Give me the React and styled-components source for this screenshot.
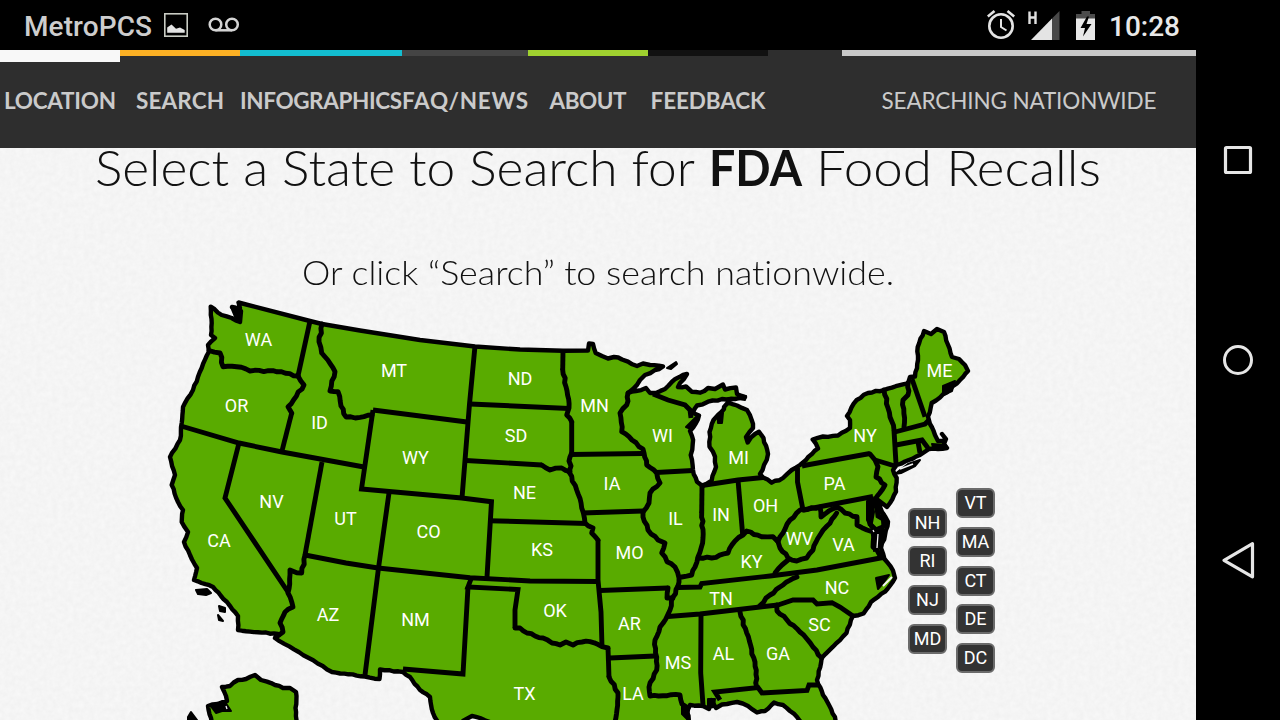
import React, { useLayoutEffect, useRef, useState } from "react";
import styled, { createGlobalStyle } from "styled-components";

const GlobalStyle = createGlobalStyle`
  * { box-sizing: border-box; }
  body { margin: 0; background: #000; overflow: hidden; }
`;

const Device = styled.div`
  width: 1280px;
  height: 720px;
  display: flex;
  flex-direction: column;
  background: #000;
  overflow: hidden;
`;

const StatusBar = styled.header`
  height: 50px;
  flex: none;
  display: flex;
  align-items: center;
  justify-content: space-between;
  padding: 0 100px 0 24px;
  font: 500 28px/50px Roboto, sans-serif;
`;

const StatusGroup = styled.div`
  display: flex;
  align-items: center;
  height: 50px;
  color: ${(p) => p.$color};
  svg { display: block; flex: none; }
`;

const StatusText = styled.span`
  padding-top: 3px;
`;

const Body = styled.div`
  display: flex;
  height: 670px;
`;

const Page = styled.main`
  position: relative;
  width: 1196px;
  height: 670px;
  background: #f4f4f4;
  overflow: hidden;
`;

const Paper = styled.svg`
  position: absolute;
  inset: 0;
  width: 100%;
  height: 100%;
`;

const NavBar = styled.nav`
  position: relative;
  z-index: 1;
  display: flex;
  height: 98px;
  background: #2e2e2e;
`;

const NavItem = styled.a`
  width: ${(p) => p.$width}px;
  height: 98px;
  flex: none;
  display: flex;
  justify-content: center;
  border-top: ${(p) => p.$bar || 6}px solid ${(p) => p.$accent};
  padding-top: ${(p) => 51 - (p.$bar || 6) - 14}px;
  color: #cacaca;
  font: ${(p) => (p.$light ? 400 : 700)} 22.5px/28px Lato, sans-serif;
  white-space: nowrap;
`;

const Fitted = styled.span`
  display: inline-block;
  flex: none;
  white-space: pre;
  transform-origin: 0 50%;
  font-variant-ligatures: none;
`;

const Title = styled.h1`
  position: relative;
  display: flex;
  margin: -11px 0 0;
  padding-left: 95px;
  gap: 14px;
  height: 60px;
  color: #111;
  font: 300 49px/60px Lato, sans-serif;
  strong { font-weight: 700; }
`;

const Subtitle = styled.p`
  position: relative;
  display: flex;
  margin: 55px 0 0;
  padding-left: 302px;
  height: 40px;
  color: #111;
  font: 300 33.5px/40px Lato, sans-serif;
`;

const MapArea = styled.section`
  position: relative;
  height: 430px;
  margin-top: -2px;
`;

const MapDrawing = styled.svg`
  display: block;
  width: 1196px;
  height: 430px;
  text {
    font: 400 18px Roboto, sans-serif;
    fill: #fff;
    text-anchor: middle;
  }
`;

const SmallStates = styled.div`
  position: absolute;
  left: 908px;
  top: 198px;
  display: flex;
  gap: 9px;
`;

const BadgeColumn = styled.div`
  display: flex;
  flex-direction: column;
  gap: 8.8px;
  padding-top: ${(p) => p.$offset}px;
`;

const Badge = styled.button`
  width: 39px;
  height: 30px;
  padding: 0 0 1px;
  border: 2px solid #6b6b6b;
  border-radius: 6px;
  background: #333;
  color: #fff;
  font: 400 18px/25px Roboto, sans-serif;
`;

const SoftKeys = styled.aside`
  width: 84px;
  height: 670px;
  display: flex;
  flex-direction: column;
  align-items: center;
  padding-top: 90px;
  gap: 160px;
  svg { display: block; }
`;

// Sizes a run of text to a given width, by tracking or by widening the letters.
function Fit({ width, children, as, stretch }) {
  const ref = useRef(null);
  const [style, setStyle] = useState({});
  useLayoutEffect(() => {
    const natural = ref.current.getBoundingClientRect().width;
    if (stretch) {
      setStyle({ transform: `scaleX(${width / natural})`, marginRight: width - natural });
    } else {
      const spacing = (width - natural) / (children.length - 1);
      setStyle({ letterSpacing: spacing, marginRight: -spacing });
    }
  }, []);
  return (
    <Fitted ref={ref} as={as} style={style}>
      {children}
    </Fitted>
  );
}

const NAV = [
  { label: "LOCATION", width: 120, text: 112, accent: "#f8f8f8", bar: 12 },
  { label: "SEARCH", width: 120, text: 88, accent: "#fbb024" },
  { label: "INFOGRAPHICS", width: 162, text: 162, accent: "#13bdd0" },
  { label: "FAQ/NEWS", width: 126, text: 126, accent: "#444" },
  { label: "ABOUT", width: 120, text: 77, accent: "#9fd12f" },
  { label: "FEEDBACK", width: 120, text: 115, accent: "#111" },
];

// Adds small deterministic notches along a line so coasts and rivers look irregular.
function rough(points, amount = 1) {
  const nums = points.trim().split(/\s+/).map((p) => p.split(",").map(Number));
  const out = [nums[0]];
  let k = 7;
  for (let i = 1; i < nums.length; i++) {
    const [x0, y0] = nums[i - 1];
    const [x1, y1] = nums[i];
    const len = Math.hypot(x1 - x0, y1 - y0);
    const n = Math.min(12, Math.floor(len / 4));
    for (let j = 1; j < n; j++) {
      k = (k * 37 + 11) % 101;
      const d = (k / 50 - 1) * amount;
      const t = j / n;
      out.push([x0 + (x1 - x0) * t - ((y1 - y0) / len) * d, y0 + (y1 - y0) * t + ((x1 - x0) / len) * d]);
    }
    out.push([x1, y1]);
  }
  return out.map((p) => p[0].toFixed(1) + "," + p[1].toFixed(1)).join(" ");
}

const NORTH = "238.5,302.5 310,321 322,324 360,330.5 420,340 475,346.5 520,349.5 563,350.7 588,350.5";
const LAKES = "588,350.5 589,343.5 593,344 595.7,353 602,356 608,358.5 614,357 622,359.5 628,361.6 637,366 643,363.5 650,365 663,366.5 655,370 645,375 640,380 633,389 628,393 636,391 646,388 650,393 656,393 665,389 672,381.7 683,375 687,374 680,383 678,387 686,386.5 691.7,391.7 700,392.7 708,388 715,389 723,384.5 725,389.5 736,387.5 737,394 745,397 735,399 722,399 708,401.7 697,405.5 693,413 699,415.5 696,423 690,431 692,436 692.7,444 690.7,455 693,470 697,481.7 702.5,486 711.7,480.5 716,467 715,456.7 709.5,446.7 709.5,432 713.5,420 718,415 724,409 724,407 728,402.5 737,405.5 747,410 751.7,420 753,428 746,437 747.7,442.5 755,434 759,431.7 763.5,438 768,454 764,465 760,474 763,477.5 771.7,482.7 783,478 791.7,470 800,465 806,460 818,448.5 812.7,439.5 823,436.5 838,435.5 850,428 850,420 847,416 856.7,400 868,393";
const ATLANTIC = "868,393 884,390 908,383.5 910,377 915,376.5 918,360 917.7,347 924,331 931,334 937,329 944,332 952,357 959,359 965,365 968,371 960,380 950,389 940,397.5 931.7,403 928,416.7 930,424 935,435 938,441 944,441 945,438 942,434 946,439 944,444 947,448 938,449 929,449 920,455 905,461.5 896.7,465 893,470 896.7,478 896,491.7 890,503 887,507 878,500 882,512 888,521.7 885,535 881,548 884.5,559 893,570.5 895,578 885,591.7 871,602 863.5,613.5 853,616 846.5,633 833,646.7 821.7,658 817,680 823,695 835,717 838,740";
const GULF = "838,740 808,730 797,717 783,705 774,702.5 765,711 757,712.5 748,706 737,702 722,704.5 716,708 711,700 709,709 703,706 690,705 687,712 690,724 690,740 500,740 490,722 480,718 472,716 463,721 458,740 450,740 440,725 433,713 430,697 420,690 410,677 403,672";
const WEST = "403,672 380,669.5 379.5,679 365,676.5 332,672 275,638 278,634 238,630 238,616 227,602 221,596 213,587 194,580 197,568 190,555 184,542 188,532 181.7,522 183,510 178,502 171.7,485 175,475 170,457 180,440 181.7,423 183,407 193,390 201.7,368 209,351.5 208,345 215,338 211,335 211.7,323 210.7,306.7 221.7,315 231.7,318 240,322 241,311 232,307 240,308 238.5,302.5";

const LAND = [
  NORTH,
  rough(LAKES, 0.8),
  rough(ATLANTIC, 0.6),
  rough(GULF, 0.6),
  rough(WEST, 0.5),
].join(" ");

const RIVERS = [
  "209,350.5 220,353 223,366.7 236.7,366.7 250,371 273,370.7 298,376",
  "298,376 304,385 288,406.7 291.7,413",
  "322,324 319,341.7 321.7,353 335,371.7 330,391 338,391.7 341,406 346,417 360,417.3 372,415",
  "541.7,465 550,470 561.7,468 570,471.7",
  "562.7,370 566,386.7 569,408 566.7,415 571.7,421.7",
  "571.7,453 569,461 571,466 569,472 576.7,490 581.7,508 585,523 593,528 591.7,533 598,540",
  "628,393 626.7,405 620,413 621.7,431.7 632,440 643,449 646.7,465 656.7,473 660,483 650,493 649,503 643,512",
  "643,512 643,517 648,530 658,540 665,543 661.7,553 667,561.7 675,567 679,578 678,586",
  "701.7,513 703,538 698,557 695,567 691.7,575 681.7,577",
  "698,558 711.7,558 728,553 735,541 743,535 746.7,531 761.7,536.7 773,536.7 778,541.7 783,533 790,520 800,510",
  "870,454 875,460 878,466.7 876,477 885,485 876.7,496.7",
  "884,390 888,408 890,417 894,430",
  "908,383 908,395 903,400 904,427",
  "778,541.7 780,548 788,558 796.7,561 806.7,558 813,550 820,535 827,526 836.7,513",
  "803,510 820,507 821,517 837,507 845,513 857,516.7 857,525 867,530 873,532 873,547 883,557",
  "788,560 782,565 775,573",
  "760,605.5 770,595 783,585 797,577",
  "776.7,605 777,611 787,620 800,632 813,647 821.7,658",
  "678,586 673,597 670,610 660,627 655,640 656.7,670 649,687 650,696 680,695 682,704 688,708",
  "515,628 520,628 527,633 535,636 543,638 552,643 560,645 566,642 573,645 582,642 590,641.7 602,646.7 608,648",
  "609,677 618,693 615,722",
  "305,555 301.7,573 296.7,572.7 290,570 288,593 293,607 285,612 280,623 283,632 276,637",
  "740,612 755,662 756.7,687",
  "668,588 667,598 673,598",
];

const LINES = [
  "310,321 298,376",
  "291.7,413 281.7,452",
  "181,426 239,443 282,452 364,467",
  "373,410 467,422",
  "373,410 361.5,489 461.7,498 491.5,501.7 487,577",
  "475,346 469.5,404 462,498",
  "470,404 569,408.5",
  "466,460.5 541.7,465",
  "563,351 562.7,370",
  "571.7,421.7 571.7,454.5 643,453.5",
  "582,513 643,511",
  "656,472.5 693,470.5",
  "653,394 668,400 685,405 690,410 691,418",
  "702,486 701.7,513",
  "702,485.5 738,480 763,477.5",
  "738,480 742.7,535",
  "797.5,468 797.5,482 803,510",
  "802,466 806.7,465 870,453.5",
  "803,510 873,496.5",
  "875,460 895,466",
  "894,430 896,464",
  "912,379 925,416.7",
  "895,432 925,424 929,420",
  "896,445 922,440 928,448",
  "918,441.7 920,453",
  "883,557.5 817,570 770,576 701.7,583.5 700,587 678,587.5",
  "668,616.5 700,614 760,607 778,605",
  "778,605 793,600 813,600 817,604 832,602.7 840,607 853,616",
  "701,615 700.7,673 703,705",
  "720,700 715,692 758,687.5 762,693 807,690.5 809,685 818,685",
  "600,590.5 668,588",
  "610,658 655,656",
  "598,540 598,580 601,612 602,646.7",
  "608,648 609,677",
  "471,579 468,587 518,589.5 515,610 515,628",
  "468,587 463,674 403,669",
  "389,493 378.5,568 365,675",
  "305,555 346,563 378,568 470,577.7 530,581 598,581.5",
  "489,520.7 587,523.5",
  "322,462 305,555",
  "239,443 225,498 288,592",
  "876,497 872,505 869,516 870,524 876,530",
  "876,500 878,516 888,522",
  "870,500 883,514 884,528",
];

const LABELS = [
  ["WA", 258.5, 339.5], ["OR", 236.5, 405.5], ["CA", 219, 540.5], ["NV", 271.5, 501.5],
  ["ID", 319.5, 422.5], ["MT", 394, 370.5], ["WY", 415.5, 457.5], ["UT", 345.5, 518.5],
  ["AZ", 328, 614.5], ["NM", 415.5, 619.5], ["CO", 428.5, 531.5], ["ND", 520, 378.5],
  ["SD", 516, 435.5], ["NE", 524.5, 492.5], ["KS", 542, 549.5], ["OK", 555, 610.5],
  ["TX", 524.5, 693.5], ["MN", 594.5, 405.5], ["IA", 612, 483.5], ["MO", 629.5, 552.5],
  ["AR", 629.5, 623.5], ["LA", 633, 693.5], ["WI", 662.5, 435.5], ["IL", 675.5, 518.5],
  ["IN", 721, 514.5], ["MI", 738.5, 457.5], ["OH", 765.5, 505.5], ["KY", 751.5, 561.5],
  ["TN", 721, 598.5], ["MS", 678, 662.5], ["AL", 723.5, 653.5], ["GA", 778, 653.5],
  ["SC", 819.5, 624.5], ["NC", 837, 587.5], ["VA", 843.5, 544.5], ["WV", 799.5, 538.5],
  ["PA", 834.5, 483.5], ["NY", 865, 435.5], ["ME", 939.5, 370.5],
];

function StateMap() {
  return (
    <MapDrawing viewBox="0 290 1196 430">
      <g fill="#59ab00" stroke="#000" strokeWidth="4.4" strokeLinejoin="round" strokeLinecap="round">
        <polygon points={LAND} />
        <polygon
          points={rough("222,687 230,686 238,680 246,679 255,675 261,680 267,681.7 275,685 283,688 290,688 296,692 296,740 213,740 214,727 211,718 208,706 227,701 226,696 222,687", 0.6)}
        />
        <g fill="none" strokeWidth="4.9" strokeLinecap="butt" strokeLinejoin="miter">
          {LINES.map((l) => <polyline key={l} points={l} />)}
        </g>
        <g fill="none" strokeWidth="4.9">
          {RIVERS.map((l) => <polyline key={l} points={rough(l, 0.9)} />)}
        </g>
      </g>
      <g fill="#000" stroke="#000" strokeWidth="2" strokeLinejoin="round">
        <path d="M196 590L207 589L211 593L206 595L198 594Z" />
        <path d="M219 606L225 608L225 612L220 611Z" />
        <path d="M218 615L223 621L219 620Z" />
        <path d="M188 717L191 712L197 720H188Z" />
        <path d="M231 307L240 307L241 322L236 319Z" />
        <path d="M667 368L676 362L677 364L671 369Z" />
        <path d="M686 427L698 415L696 423L691 429Z" />
        <path d="M718 415L723 413L722 423L718 423Z" />
        <path d="M739 395L746 396L745 400L738 399Z" />
        <path d="M895 474L908 464L920 460L915 466L901 473Z" />
        <path d="M943 386L955 381L952 391L943 395Z" />
        <path d="M932 444L946 445L947 448L934 450Z" />
        <path d="M867 501L872 498L874 512L871 528L867 520Z" />
        <path d="M872 530L884 525L881 545L874 551Z" />
        <path d="M876 578L889 575L884 582L878 589Z" />
        <path d="M210 705L225 702L231 711L222 711L216 713Z" />
        <path d="M708 699L715 699L714 707L708 708ZM682 705L689 709L688 720L682 714Z" />
      </g>
      <g stroke="#f4f4f4" strokeWidth="1.3" fill="none">
        <path d="M883 586L892 577" strokeWidth="2" />
        <path d="M878 534L877 548M873 530L874 532" />
        <path d="M900 469L913 464" strokeWidth="1.8" />
        <path d="M226 706L227 709" />
      </g>
      {LABELS.map(([name, x, y]) => <text key={name} x={x} y={y + 6.5}>{name}</text>)}
    </MapDrawing>
  );
}

const ImageIcon = () => (
  <svg width="24" height="24" viewBox="0 0 24 24">
    <rect x="0.8" y="0.8" width="22.4" height="22.4" fill="none" stroke="#c9ccc4" strokeWidth="1.6" />
    <path d="M3.2 19.8V14.5L7.5 11.5L12 15.8L16 14.5L20.7 17V19.8Z" fill="#e4e4e4" />
  </svg>
);

const VoicemailIcon = () => (
  <svg width="32" height="16" viewBox="0 0 32 16" fill="none" stroke="#d4d4d4" strokeWidth="2.5">
    <circle cx="7.5" cy="7.5" r="5.8" />
    <circle cx="24" cy="7.5" r="5.8" />
    <path d="M7.5 13.3H24" />
  </svg>
);

const AlarmIcon = () => (
  <svg width="28" height="30" viewBox="0 0 28 30" fill="none" stroke="#e4e4e4">
    <circle cx="14" cy="16" r="11.7" strokeWidth="2.6" />
    <path d="M14 9V17L19.5 20.5" strokeWidth="2" />
    <path d="M0.8 6.5L7.5 1M27.2 6.5L20.5 1" strokeWidth="2.6" />
  </svg>
);

const SignalIcon = () => (
  <svg width="32" height="30" viewBox="0 0 32 30">
    <path d="M24 8.5L31.5 1V30H24Z" fill="#484848" />
    <path d="M3 30L24 8.5V30Z" fill="#e4e4e4" />
    <path d="M1.5 1.5V14M7.5 1.5V14M1.5 7.5H7.5" stroke="#e0e0e0" strokeWidth="2.4" fill="none" />
  </svg>
);

const BatteryIcon = () => (
  <svg width="19" height="29" viewBox="0 0 19 29">
    <path d="M5.5 0H14V3H19V8H0V3H5.5Z" fill="#4c4c4c" />
    <path d="M0 7.5H19V29H0Z" fill="#e8e8e8" />
    <path d="M11 5.5L4.5 17H9L7 25.5L15.5 13H10.5L13 5.5Z" fill="#000" />
  </svg>
);

const Space = styled.i`
  flex: none;
  width: ${(p) => p.$w}px;
`;

export default function App() {
  return (
    <Device>
      <GlobalStyle />
      <StatusBar>
        <StatusGroup $color="#cdcdcd">
          <StatusText><Fit width={128}>MetroPCS</Fit></StatusText>
          <Space $w={12} />
          <ImageIcon />
          <Space $w={20} />
          <VoicemailIcon />
        </StatusGroup>
        <StatusGroup $color="#e8e8e8">
          <AlarmIcon />
          <Space $w={13} />
          <SignalIcon />
          <Space $w={16} />
          <BatteryIcon />
          <Space $w={14} />
          <StatusText><Fit width={71}>10:28</Fit></StatusText>
        </StatusGroup>
      </StatusBar>
      <Body>
        <Page>
          <Paper>
            <filter id="grain" x="0" y="0" width="100%" height="100%" colorInterpolationFilters="sRGB">
              <feTurbulence type="fractalNoise" baseFrequency="0.19" numOctaves="3" seed="4" />
              <feColorMatrix values="0.035 0 0 0 0.941  0.035 0 0 0 0.941  0.035 0 0 0 0.941  0 0 0 0 1" />
            </filter>
            <rect width="100%" height="100%" filter="url(#grain)" />
          </Paper>
          <NavBar>
            {NAV.map((n) => (
              <NavItem key={n.label} $width={n.width} $accent={n.accent} $bar={n.bar}>
                <Fit width={n.text}>{n.label}</Fit>
              </NavItem>
            ))}
            <Space $w={74} />
            <NavItem $width={354} $accent="#c8c8c8" $light>
              <Fit width={275}>SEARCHING NATIONWIDE</Fit>
            </NavItem>
          </NavBar>
          <Title>
            <Fit width={600} stretch>Select a State to Search for</Fit>
            <Fit width={93} as="strong" stretch>FDA</Fit>
            <Fit width={285} stretch>Food Recalls</Fit>
          </Title>
          <Subtitle>
            <Fit width={592} stretch>Or click “Search” to search nationwide.</Fit>
          </Subtitle>
          <MapArea>
            <StateMap />
            <SmallStates>
              <BadgeColumn $offset={19.6}>
                {["NH", "RI", "NJ", "MD"].map((s) => <Badge key={s}>{s}</Badge>)}
              </BadgeColumn>
              <BadgeColumn $offset={0}>
                {["VT", "MA", "CT", "DE", "DC"].map((s) => <Badge key={s}>{s}</Badge>)}
              </BadgeColumn>
            </SmallStates>
          </MapArea>
        </Page>
        <SoftKeys>
          <svg width="40" height="40" viewBox="0 0 40 40">
            <rect x="7.5" y="7.5" width="25" height="25" rx="1" fill="none" stroke="#e6e6e6" strokeWidth="3.2" />
          </svg>
          <svg width="40" height="40" viewBox="0 0 40 40">
            <circle cx="20" cy="20" r="13.5" fill="none" stroke="#e6e6e6" strokeWidth="3" />
          </svg>
          <svg width="40" height="40" viewBox="0 0 40 40">
            <path d="M6 20.3L34.5 3.7V36.8Z" fill="none" stroke="#e6e6e6" strokeWidth="3.2" strokeLinejoin="round" />
          </svg>
        </SoftKeys>
      </Body>
    </Device>
  );
}
